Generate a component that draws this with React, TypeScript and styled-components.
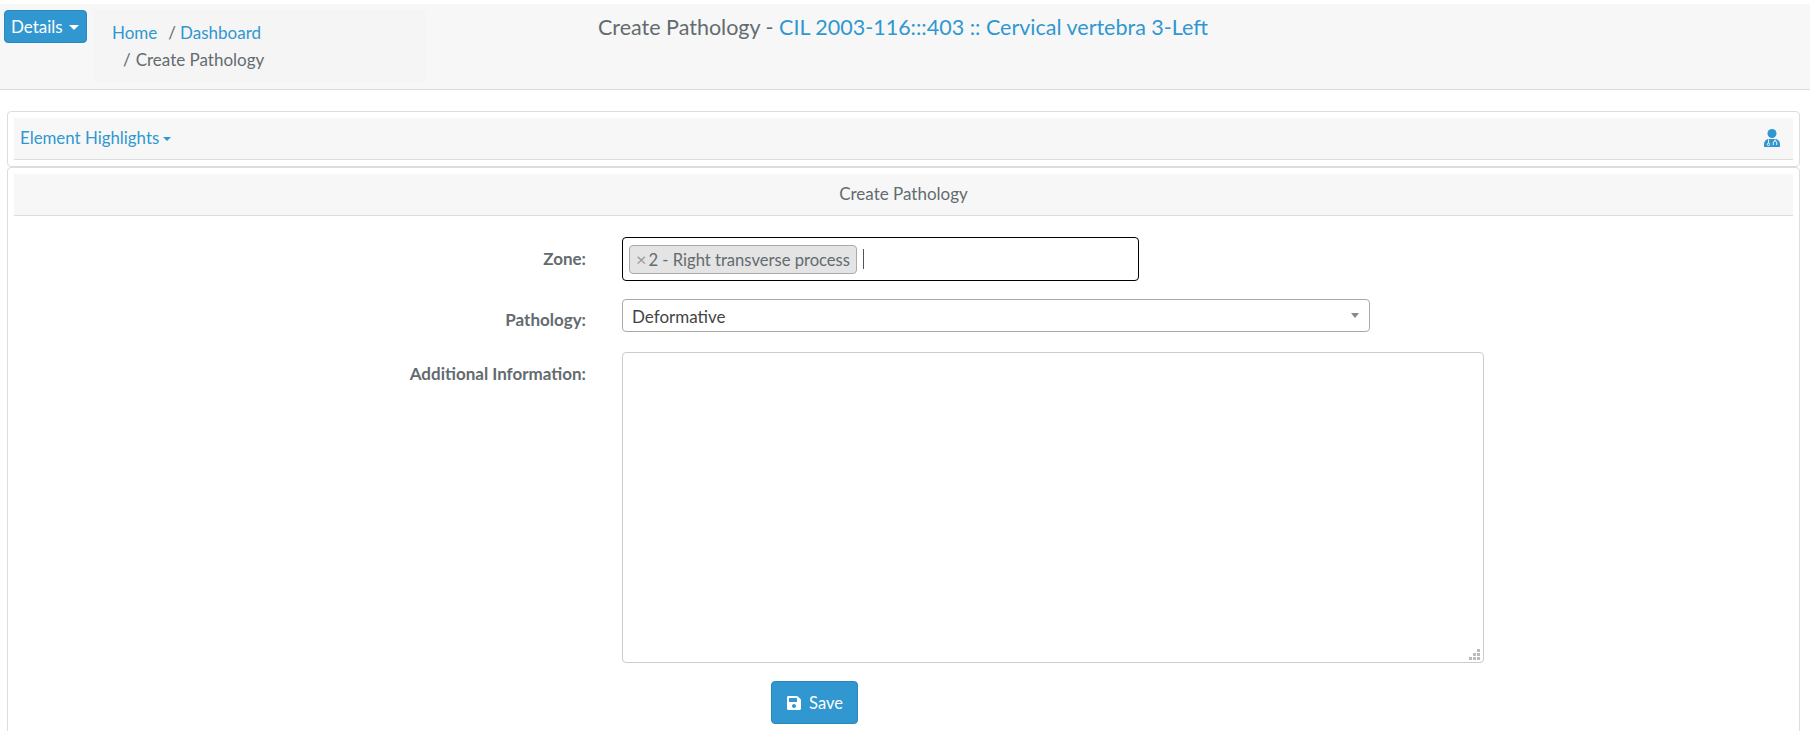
import React from "react";
import styled, { createGlobalStyle } from "styled-components";
import { FaSave } from "react-icons/fa";

const BLUE = "#3097d1";
const TEXT = "#636b6f";

const DoctorIcon = () => (
  <svg width="16" height="18" viewBox="0 0 16 18">
    <circle cx="8" cy="4.5" r="4.5" fill={BLUE} />
    <path d="M0 18v-3a5 5 0 0 1 5-5h6a5 5 0 0 1 5 5v3z" fill={BLUE} />
    <g fill="none" stroke="#f7f7f7" strokeWidth="1">
      <path d="M4.5 10.5v3.5" />
      <circle cx="4.5" cy="15.3" r="1.2" />
      <path d="M11 10.5v1.5M9.3 16v-2.3a1.7 1.7 0 0 1 3.4 0V16" />
    </g>
  </svg>
);

const ResizeGrip = () => (
  <GripSvg width="11" height="11" viewBox="0 0 11 11" fill="#bbb">
    <rect x="8" y="0" width="3" height="3" />
    <rect x="4" y="4" width="3" height="3" />
    <rect x="8" y="4" width="3" height="3" />
    <rect x="0" y="8" width="3" height="3" />
    <rect x="4" y="8" width="3" height="3" />
    <rect x="8" y="8" width="3" height="3" />
  </GripSvg>
);

const App = () => {
  return (
    <Page>
      <GlobalStyle />
      <Header>
        <DetailsButton>
          Details <Caret />
        </DetailsButton>
        <Breadcrumb>
          <Crumb>
            <a>Home</a>
            <Slash>/</Slash>
            <a>Dashboard</a>
          </Crumb>
          <CurrentCrumb>
            <Slash>/</Slash>Create Pathology
          </CurrentCrumb>
        </Breadcrumb>
        <Title>
          Create Pathology - <a>CIL 2003-116:::403 :: Cervical vertebra 3-Left</a>
        </Title>
      </Header>
      <Content>
        <HighlightsCard>
          <HighlightsBar>
            <HighlightsLink>
              Element Highlights <SmallCaret />
            </HighlightsLink>
            <DoctorIcon />
          </HighlightsBar>
        </HighlightsCard>
        <FormCard>
          <FormHeading>Create Pathology</FormHeading>
          <Form>
            <Label>Zone:</Label>
            <ZoneInput>
              <Tag>
                <TagRemove>×</TagRemove>2 - Right transverse process
              </Tag>
              <Cursor />
            </ZoneInput>
            <PathologyLabel>Pathology:</PathologyLabel>
            <SelectBox>
              Deformative
              <SelectArrow />
            </SelectBox>
            <InfoLabel>Additional Information:</InfoLabel>
            <TextAreaWrap>
              <TextArea />
              <ResizeGrip />
            </TextAreaWrap>
          </Form>
          <SaveRow>
            <SaveButton>
              <FaSave size={16} /> Save
            </SaveButton>
          </SaveRow>
        </FormCard>
      </Content>
    </Page>
  );
};

export default App;

const GlobalStyle = createGlobalStyle`
  html, body {
    margin: 0;
    padding: 0;
    background: #fff;
    overflow: hidden;
  }
  * {
    box-sizing: border-box;
  }
  body {
    font-family: Lato, "Liberation Sans", sans-serif;
    font-size: 17px;
    line-height: 24px;
    color: ${TEXT};
  }
  a {
    color: ${BLUE};
    text-decoration: none;
  }
`;

const Page = styled.div`
  width: 1810px;
  height: 731px;
  padding-top: 4px;
  overflow: hidden;
`;

const Header = styled.header`
  position: relative;
  height: 86px;
  padding: 6px 0 0 4px;
  display: flex;
  align-items: flex-start;
  background: #f7f7f7;
  border-bottom: 1px solid #ddd;
`;

const DetailsButton = styled.button`
  width: 83px;
  height: 33px;
  padding: 0 1px 0 0;
  font: inherit;
  color: #fff;
  background: ${BLUE};
  border: 1px solid #2a88bd;
  border-radius: 4px;
`;

const Caret = styled.span`
  display: inline-block;
  margin-left: 2px;
  vertical-align: 3px;
  border-top: 5px solid #fff;
  border-left: 5px solid transparent;
  border-right: 5px solid transparent;
`;

const SmallCaret = styled.span`
  display: inline-block;
  margin-left: -1px;
  vertical-align: 3px;
  border-top: 4px solid ${BLUE};
  border-left: 4px solid transparent;
  border-right: 4px solid transparent;
`;

const Breadcrumb = styled.nav`
  width: 333px;
  height: 72px;
  margin-left: 6px;
  padding: 9px 0 0 19px;
  background: #f5f5f5;
  border-radius: 4px;
  line-height: 27px;
`;

const Crumb = styled.div`
  display: flex;
`;

const CurrentCrumb = styled.div`
  padding-left: 11px;
`;

const Slash = styled.span`
  margin: 0 4px 0 11px;
  ${CurrentCrumb} & {
    margin-left: 0;
    margin-right: 5px;
  }
`;

const Title = styled.h1`
  margin: 0;
  position: absolute;
  left: 598px;
  top: 9px;
  font-size: 21.5px;
  font-weight: 400;
  line-height: 28px;
  white-space: nowrap;
`;

const Content = styled.main`
  padding: 21px 10px 0 7px;
`;

const HighlightsCard = styled.section`
  height: 56px;
  padding: 6px;
  background: #fff;
  border: 1px solid #ddd;
  border-radius: 4px;
`;

const HighlightsBar = styled.div`
  height: 42px;
  padding: 0 13px 2px 6px;
  display: flex;
  align-items: center;
  justify-content: space-between;
  background: #f7f7f7;
  border-bottom: 1px solid #ddd;
`;

const HighlightsLink = styled.a`
  font-size: 16.85px;
`;

const FormCard = styled.section`
  height: 600px;
  padding: 6px;
  background: #fff;
  border: 1px solid #ddd;
  border-radius: 4px;
`;

const FormHeading = styled.div`
  height: 42px;
  line-height: 39px;
  text-align: center;
  background: #f7f7f7;
  border-bottom: 1px solid #ddd;
`;

const Form = styled.div`
  display: grid;
  grid-template-columns: 572px 1fr;
  column-gap: 36px;
  align-items: start;
  margin-top: 21px;
`;

const Label = styled.label`
  font-weight: 700;
  text-align: right;
  line-height: 24px;
  padding-top: 10px;
`;

const PathologyLabel = styled(Label)`
  margin-top: 16px;
  padding-top: 11px;
`;

const InfoLabel = styled(Label)`
  margin-top: 20px;
`;

const ZoneInput = styled.div`
  width: 517px;
  height: 44px;
  padding: 6px;
  display: flex;
  align-items: center;
  background: #fff;
  border: 1px solid #000;
  border-radius: 4px;
`;

const Tag = styled.span`
  height: 29px;
  padding: 0 6px 0 6px;
  font-size: 16.6px;
  line-height: 26px;
  white-space: nowrap;
  background: #e4e4e4;
  border: 1px solid #aaa;
  border-radius: 4px;
`;

const TagRemove = styled.span`
  margin-right: 2px;
  font-size: 18px;
  font-weight: 400;
  color: #999;
`;

const Cursor = styled.span`
  width: 1px;
  height: 20px;
  margin-left: 6px;
  background: #555;
`;

const SelectBox = styled.div`
  position: relative;
  width: 748px;
  height: 33px;
  margin-top: 18px;
  padding-left: 9px;
  line-height: 33px;
  color: #444;
  background: #fff;
  border: 1px solid #aaa;
  border-radius: 4px;
`;

const SelectArrow = styled.span`
  position: absolute;
  right: 10px;
  top: 13px;
  border-top: 5px solid #888;
  border-left: 4px solid transparent;
  border-right: 4px solid transparent;
`;

const TextAreaWrap = styled.div`
  position: relative;
  width: 862px;
  height: 311px;
  margin-top: 20px;
`;

const TextArea = styled.textarea`
  display: block;
  width: 100%;
  height: 100%;
  resize: none;
  font: inherit;
  background: #fff;
  border: 1px solid #ccc;
  border-radius: 4px;
`;

const GripSvg = styled.svg`
  position: absolute;
  right: 4px;
  bottom: 3px;
`;

const SaveRow = styled.div`
  margin-top: 18px;
  padding-left: 757px;
`;

const SaveButton = styled.button`
  width: 87px;
  height: 43px;
  padding: 0;
  display: flex;
  align-items: center;
  justify-content: center;
  gap: 7px;
  font: inherit;
  font-size: 16.5px;
  color: #fff;
  background: ${BLUE};
  border: 1px solid #2a88bd;
  border-radius: 4px;
`;
